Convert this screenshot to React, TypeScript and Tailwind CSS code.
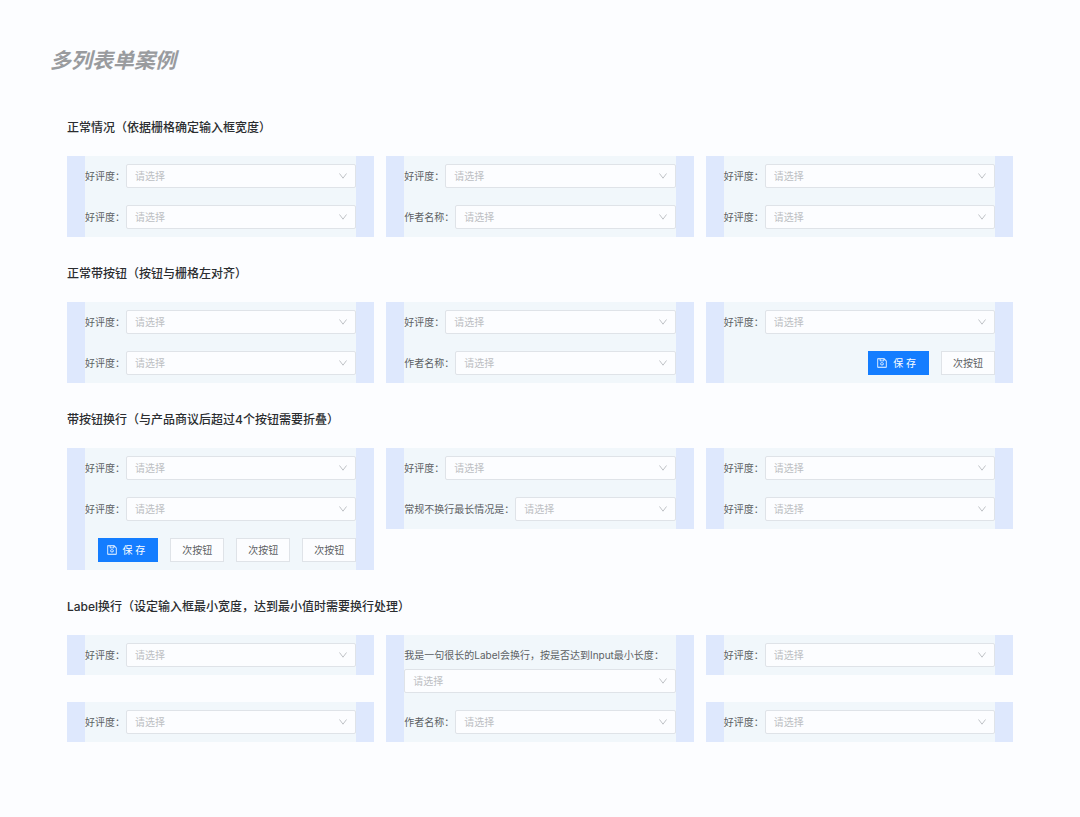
import React, { useId } from 'react';
import { AiOutlineSave } from 'react-icons/ai';

type Field = { label: string; wrap?: boolean };

interface PanelData {
  fields: Field[];
  actions?: string[];
}

interface SectionData {
  title: string;
  columns: PanelData[][];
}

const rating: Field = { label: '好评度' };
const author: Field = { label: '作者名称' };

const sections: SectionData[] = [
  {
    title: '正常情况（依据栅格确定输入框宽度）',
    columns: [
      [{ fields: [rating, rating] }],
      [{ fields: [rating, author] }],
      [{ fields: [rating, rating] }],
    ],
  },
  {
    title: '正常带按钮（按钮与栅格左对齐）',
    columns: [
      [{ fields: [rating, rating] }],
      [{ fields: [rating, author] }],
      [{ fields: [rating], actions: ['次按钮'] }],
    ],
  },
  {
    title: '带按钮换行（与产品商议后超过4个按钮需要折叠）',
    columns: [
      [{ fields: [rating, rating], actions: ['次按钮', '次按钮', '次按钮'] }],
      [{ fields: [rating, { label: '常规不换行最长情况是' }] }],
      [{ fields: [rating, rating] }],
    ],
  },
  {
    title: 'Label换行（设定输入框最小宽度，达到最小值时需要换行处理）',
    columns: [
      [{ fields: [rating] }, { fields: [rating] }],
      [{ fields: [{ label: '我是一句很长的Label会换行，按是否达到Input最小长度', wrap: true }, author] }],
      [{ fields: [rating] }, { fields: [rating] }],
    ],
  },
];

const SelectField: React.FC<Field> = ({ label, wrap }) => {
  const id = useId();
  return (
    <div className={wrap ? 'flex flex-col gap-0.5' : 'flex items-center gap-px'}>
      <label htmlFor={id} className="shrink-0 whitespace-nowrap text-[10px] leading-6 text-[#5c5f63]">
        {label}：
      </label>
      <div className="relative min-w-0 flex-1">
        <select
          id={id}
          defaultValue=""
          className="block h-6 w-full appearance-none rounded-xs border border-[#dfe3e8] bg-[#fcfdff] pl-2 pr-6 text-[10px] text-[#bcbfc3] outline-none focus:border-[#147dff]"
        >
          <option value="">请选择</option>
        </select>
        <svg
          viewBox="0 0 8 6"
          className="pointer-events-none absolute right-[9px] top-1/2 h-1.5 w-2 -translate-y-1/2"
          fill="none"
          stroke="#c0c3c7"
        >
          <path d="M0.5 0.5L4 5.2L7.5 0.5" />
        </svg>
      </div>
    </div>
  );
};

const Actions: React.FC<{ items: string[] }> = ({ items }) => (
  <div className="flex justify-end gap-3">
    <button
      type="button"
      className="flex h-6 shrink-0 items-center gap-[5px] bg-[#147dff] pl-2 pr-[13px] text-[10px] text-[#fcfdff]"
    >
      <AiOutlineSave className="h-3 w-3" />
      <span>保 存</span>
    </button>
    {items.map((item, idx) => (
      <button
        key={idx}
        type="button"
        className="h-6 shrink-0 border border-[#dfe3e8] bg-[#fcfdff] px-[11px] text-[10px] text-[#5c5f63]"
      >
        {item}
      </button>
    ))}
  </div>
);

const Panel: React.FC<PanelData> = ({ fields, actions }) => (
  <div className="flex flex-col gap-[17px] border-x-[18px] border-[#dee8fd] bg-[#f1f7fb] py-2">
    {fields.map((field, idx) => (
      <SelectField key={idx} {...field} />
    ))}
    {actions && <Actions items={actions} />}
  </div>
);

const App: React.FC = () => {
  return (
    <main className="min-h-screen bg-[#fcfdff] pb-16 pt-[45px] font-['Inter','Noto_Sans_CJK_SC',sans-serif]">
      <h1 className="px-[50px] text-[21px] font-bold italic leading-8 text-[#999b9e]">多列表单案例</h1>
      <div className="mt-[42px] flex flex-col gap-7 px-[67px]">
        {sections.map((section) => (
          <section key={section.title}>
            <h2 className="mb-[19px] text-xs font-medium leading-[18px] text-[#2b2d30]">{section.title}</h2>
            <div className="grid grid-cols-3 gap-3">
              {section.columns.map((panels, idx) => (
                <div key={idx} className="flex flex-col justify-between">
                  {panels.map((panel, i) => (
                    <Panel key={i} {...panel} />
                  ))}
                </div>
              ))}
            </div>
          </section>
        ))}
      </div>
    </main>
  );
};

export default App;
